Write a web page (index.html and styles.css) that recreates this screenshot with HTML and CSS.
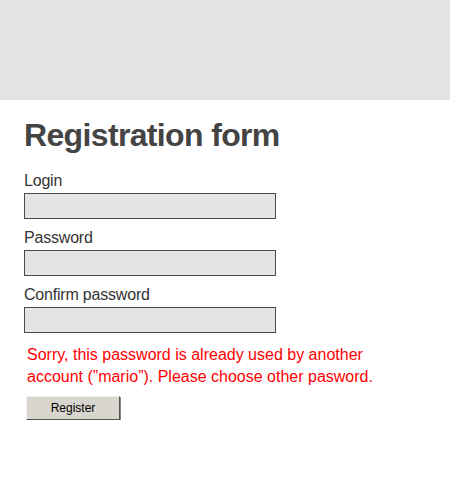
FILE: index.html
```html
<!DOCTYPE html>
<html>
<head>
<meta charset="utf-8">
<link rel="stylesheet" href="styles.css">
</head>
<body>
<div class="topbar"></div>
<main class="content">
  <h1 class="title">Registration form</h1>
  <form class="form">
    <div class="field">
      <label class="label" for="login">Login</label>
      <input class="input" id="login" type="text">
    </div>
    <div class="field">
      <label class="label" for="pw">Password</label>
      <input class="input" id="pw" type="password">
    </div>
    <div class="field">
      <label class="label" for="pw2">Confirm password</label>
      <input class="input" id="pw2" type="password">
    </div>
    <p class="error">Sorry, this password is already used by another account (”mario”). Please choose other pasword.</p>
    <button class="button" type="button">Register</button>
  </form>
</main>
</body>
</html>
```

FILE: styles.css
```css
html, body {
  margin: 0;
  padding: 0;
  background: #fff;
}
body {
  font-family: "Liberation Sans", Arial, sans-serif;
  color: #333;
}
.topbar {
  height: 100px;
  background: #e4e4e4;
}
.content {
  padding-left: 24px;
}
.title {
  margin: 17px 0 0 0;
  font-size: 32px;
  line-height: 36px;
  font-weight: bold;
  color: #444;
  letter-spacing: -0.65px;
}
.form {
  margin-top: 19px;
  display: flex;
  flex-direction: column;
  gap: 10px;
}
.field {
  display: flex;
  flex-direction: column;
  gap: 3px;
}
.label {
  font-size: 16px;
  line-height: 18px;
  color: #333;
  letter-spacing: -0.2px;
}
.input {
  box-sizing: border-box;
  width: 252px;
  height: 26px;
  margin: 0;
  border: 1px solid #4a4a4a;
  background: #e4e4e4;
  padding: 0 4px;
  font: 14px "Liberation Sans", Arial, sans-serif;
}
.error {
  margin: 1px 0 0 3px;
  font-size: 16px;
  line-height: 22px;
  color: #f00;
  max-width: 360px;
}
.button {
  margin: -2px 0 0 2px;
  box-sizing: border-box;
  width: 94px;
  height: 24px;
  background: #d8d5cf;
  border: 1px solid;
  border-color: #f2f1ee #555 #555 #f2f1ee;
  box-shadow: 1px 1px 0 #888;
  font: 12px "Liberation Sans", Arial, sans-serif;
  color: #000;
  padding: 0;
  align-self: flex-start;
}
```
